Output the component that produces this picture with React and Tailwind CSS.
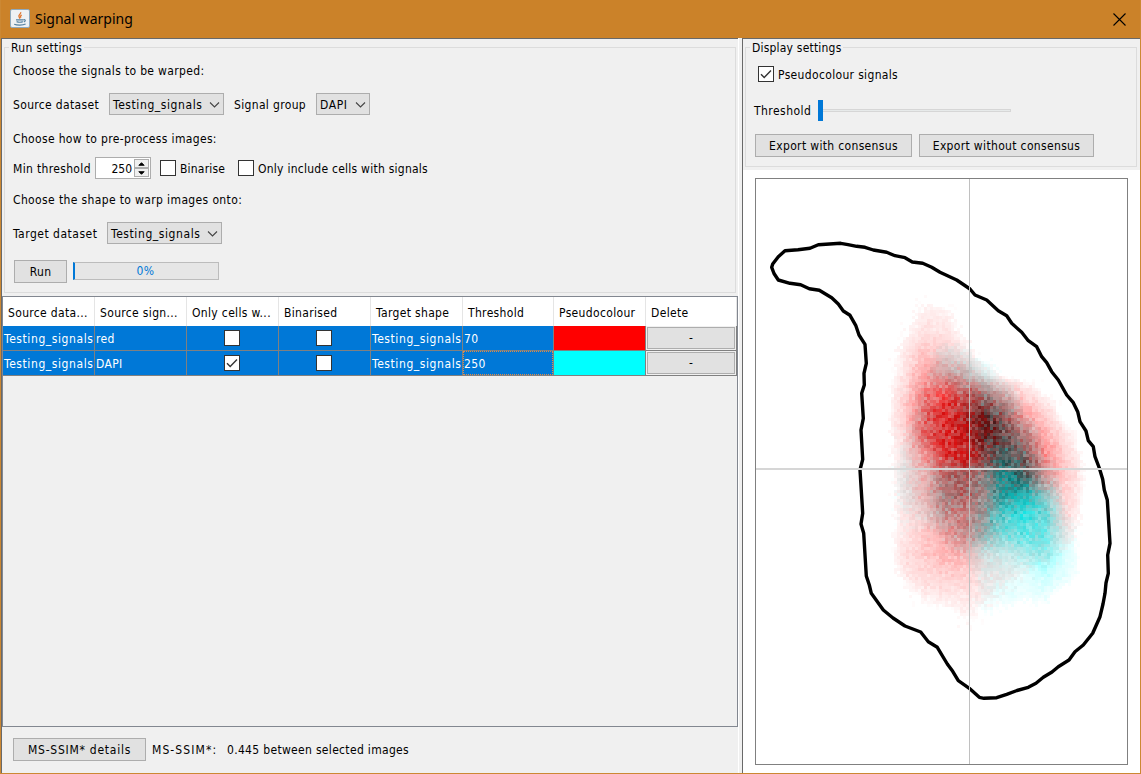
import React from "react";

const OUTLINE = [
  [771.7, 267.3], [774, 273.5], [778.3, 280], [790, 283.3], [800.7, 284.7], [809.3, 288.7], [819.3, 290.3],
  [831.7, 297.7], [838.3, 304], [843.3, 311], [850, 315.3], [855.7, 325.3], [859, 335], [865, 344.3],
  [866.3, 363.3], [864, 373.3], [864.3, 385], [861.7, 393.3], [863.3, 418.3], [861, 430], [862.7, 459.3],
  [860, 470], [862.7, 513.3], [861, 524], [863.7, 533.3], [866.3, 576], [869.3, 585], [871.3, 593.3],
  [883.3, 610], [893, 618], [905, 626], [920.7, 632], [928.3, 641.7], [937.3, 647.3], [947.3, 664],
  [952.7, 671.3], [958.3, 680.7], [969.3, 688.3], [979.3, 697.3], [984, 698.3], [996.7, 697.7],
  [1006.7, 694.3], [1017, 690.5], [1028.3, 687.3], [1036, 683.3], [1043.3, 677.3], [1052, 672], [1058.3, 666.7], [1069, 660], [1075, 651.7],
  [1083.3, 645], [1092.7, 633.3], [1100, 616.7], [1103, 604], [1105, 593.3], [1106, 583], [1108.3, 573.3], [1107.7, 555],
  [1110, 543.3], [1107.3, 500], [1104.3, 490], [1102.7, 479.3], [1099.3, 468], [1095, 456.7],
  [1093.3, 446.7], [1088.3, 440.7], [1086, 431], [1080, 421.7], [1077.7, 411.7], [1073.3, 402.7],
  [1066.7, 395], [1058.3, 380], [1051.7, 371.7], [1046.7, 362.7], [1041.7, 356.7], [1036.7, 346.7],
  [1028.3, 340.7], [1021.7, 332.3], [1011.7, 323.3], [1006.7, 315.7], [998.3, 310.7], [986.7, 300],
  [975, 295], [970, 289], [956.7, 280], [940, 272.3], [931.7, 267.3], [922.7, 263.3], [912.3, 262],
  [905, 257.7], [895, 255.7], [886.7, 252.3], [873.3, 250], [865, 247.3], [856.7, 246.3], [848, 244.6], [840.7, 243.3],
  [818.3, 244.7], [810, 248.3], [798, 249.8], [785, 250.7], [778.3, 256.7], [772.7, 264],
];

// Signal densities (tenths) sampled every 20px from (885, 295).
const RED = [
  [0, 0, 0.3, 0, 0, 0, 0, 0, 0, 0, 0],
  [0, 0.2, 0.8, 0.8, 0, 0, 0, 0, 0, 0, 0],
  [0, 0.5, 1.2, 1.1, 0.4, 0, 0, 0, 0, 0, 0],
  [0, 0.9, 2.5, 2, 1, 0, 0, 0, 0, 0, 0],
  [0, 1.1, 3.5, 4, 3.2, 1, 0.2, 0, 0, 0, 0],
  [0, 1.7, 5, 7, 6.6, 5.5, 3.3, 1.5, 0.5, 0, 0],
  [0.1, 2, 6, 8.2, 8.2, 8.5, 6, 3.7, 1.8, 0, 0],
  [0, 1.6, 6.3, 8.4, 8.7, 8.5, 7, 4.8, 3.2, 1, 0],
  [0, 1.3, 4.4, 7.7, 8.8, 7.3, 6, 6, 4.5, 1.7, 0.2],
  [0, 1.2, 3, 5.5, 6.3, 5, 5, 6, 4.7, 2.1, 0.4],
  [0, 1.1, 3, 5, 6, 4.4, 4, 2.7, 2.4, 1.7, 0.3],
  [0, 1, 2, 4.5, 5, 3.8, 1.8, 1.1, 1.5, 1.5, 0.2],
  [0, 1, 2, 3.5, 4.5, 2.8, 1.3, 1.1, 1.1, 1, 0.1],
  [0, 1.2, 2, 3, 2.8, 1.3, 0.9, 0.9, 0.9, 0.3, 0],
  [0, 0.8, 1.5, 1.8, 1.8, 1, 0.9, 0.5, 0.2, 0, 0],
  [0, 0.1, 0.8, 0.9, 1, 0.8, 0.4, 0, 0, 0, 0],
  [0, 0, 0, 0.2, 0.7, 0.3, 0, 0, 0, 0, 0],
  [0, 0, 0, 0, 0.1, 0, 0, 0, 0, 0, 0],
];
const CYAN = [
  [0, 0, 0, 0, 0, 0, 0, 0, 0, 0, 0],
  [0, 0, 0, 0, 0, 0, 0, 0, 0, 0, 0],
  [0, 0, 0, 0, 0, 0, 0, 0, 0, 0, 0],
  [0, 0, 0, 1.3, 0.9, 0, 0, 0, 0, 0, 0],
  [0, 0.2, 0.5, 1.8, 2.4, 1.6, 0, 0, 0, 0, 0],
  [0, 0.3, 0.8, 0.5, 2.5, 3.8, 2, 0, 0, 0, 0],
  [0, 0.2, 1.3, 1.2, 3, 6.2, 4.2, 0.6, 0, 0, 0],
  [0, 0.5, 1.3, 1.4, 2.4, 6, 6, 2.9, 0, 0, 0],
  [0, 0.9, 0.7, 1.5, 1.8, 4.7, 7, 5, 0.6, 0, 0],
  [0, 1, 0.9, 3, 3.6, 4.7, 8.8, 7, 1.8, 0, 0],
  [0, 1, 0.9, 3.4, 3.2, 4, 8.8, 8.7, 4.3, 0.2, 0],
  [0, 0.6, 0.9, 2.5, 2, 4.5, 7, 7.8, 5.8, 0.7, 0],
  [0, 0.3, 0.3, 0.8, 2.2, 4.2, 4.8, 6.3, 5.5, 1.2, 0],
  [0, 0, 0.2, 0.3, 0.7, 1.8, 2.1, 3, 4.3, 1.5, 0],
  [0, 0, 0, 0, 0, 1, 1.1, 1, 2.2, 1.1, 0],
  [0, 0, 0, 0, 0, 0.8, 1, 0.8, 0.9, 0, 0],
  [0, 0, 0, 0, 0, 0.5, 0.3, 0, 0, 0, 0],
  [0, 0, 0, 0, 0, 0, 0, 0, 0, 0, 0],
];

function sample(grid, x, y) {
  const i = Math.min(9, Math.floor(x));
  const j = Math.min(16, Math.floor(y));
  const s = x - i;
  const t = y - j;
  const top = grid[j][i] * (1 - s) + grid[j][i + 1] * s;
  const bottom = grid[j + 1][i] * (1 - s) + grid[j + 1][i + 1] * s;
  return (top * (1 - t) + bottom * t) / 10;
}

function buildCells() {
  let seed = 1234567;
  const rnd = () => {
    seed = (seed * 1664525 + 1013904223) % 4294967296;
    return seed / 4294967296;
  };
  const noisy = (density) => {
    const v = density < 0.09 ? (density * density) / 0.09 : density;
    const n = v * (1 + (rnd() + rnd() - 1) * 0.3) + (rnd() - 0.5) * 0.05;
    if (v < 0.003) return 0;
    if (v < 0.05 && rnd() > v / 0.05) return 0;
    return Math.max(0, Math.min(0.94, n));
  };
  const cells = [];
  for (let y = 295; y < 634; y += 3) {
    for (let x = 885; x < 1084; x += 3) {
      const u = (x - 885 + 1.5) / 20;
      const v = (y - 295 + 1.5) / 20;
      const r = noisy(sample(RED, u, v));
      const c = noisy(sample(CYAN, u, v));
      if (r < 0.01 && c < 0.01) continue;
      const gb = Math.round(255 * (1 - r));
      cells.push({ x, y, fill: `rgb(${Math.round(255 * (1 - c))},${gb},${gb})` });
    }
  }
  return cells;
}

const CELLS = buildCells();

function Check({ checked }) {
  return (
    <span className="flex h-4 w-4 shrink-0 items-center justify-center border border-[#333] bg-white">
      {checked && (
        <svg width="14" height="14" viewBox="0 0 14 14" fill="none" stroke="#333" strokeWidth="1.4">
          <path d="M2 7.2 5.2 10.4 12 3.6" />
        </svg>
      )}
    </span>
  );
}

function Combo({ children, className }) {
  return (
    <div className={`flex h-[22px] shrink-0 items-center justify-between border border-[#adadad] bg-[#e1e1e1] pr-[3px] pl-[3px] ${className}`}>
      <span className="pt-px tracking-[0.58px]">{children}</span>
      <svg width="11" height="8" viewBox="0 0 11 8" fill="none" stroke="#444" strokeWidth="1.1" className="mt-px shrink-0">
        <path d="M1 1.5 5.5 6 10 1.5" />
      </svg>
    </div>
  );
}

function Button({ children, className }) {
  return (
    <button className={`flex h-[23px] shrink-0 items-center justify-center border border-[#adadad] bg-[#e1e1e1] ${className}`}>
      {children}
    </button>
  );
}

function Plot() {
  return (
    <svg width="373" height="587" viewBox="755 178 373 587" className="block">
      <g shapeRendering="crispEdges">
        {CELLS.map((c) => (
          <rect key={`${c.x}-${c.y}`} x={c.x} y={c.y} width="3" height="3" fill={c.fill} />
        ))}
      </g>
      <polygon points={OUTLINE.map((p) => p.join(",")).join(" ")} fill="none" stroke="#000" strokeWidth="3.4" strokeLinejoin="round" />
      <g shapeRendering="crispEdges">
        <rect x="755" y="468" width="373" height="2" fill="#d6d6d6" />
        <rect x="969" y="178" width="1" height="587" fill="#c0c0c0" />
        <rect x="755.5" y="178.5" width="372" height="586" fill="none" stroke="#808080" />
      </g>
    </svg>
  );
}

const COLUMNS = ["Source data...", "Source sign...", "Only cells w...", "Binarised", "Target shape", "Threshold", "Pseudocolour", "Delete"];
const ROWS = [
  { signal: "red", only: false, threshold: "70", color: "bg-[#ff0000]" },
  { signal: "DAPI", only: true, threshold: "250", color: "bg-[#00ffff]", focus: true },
];
const GRID = "grid grid-cols-[92px_92px_92px_92px_92px_91px_92px_91px]";
const CELL = "flex items-center border-r border-b border-[#808080] bg-[#0078d7] text-white whitespace-nowrap overflow-hidden";

function SignalTable() {
  return (
    <div className="h-[431px] w-[736px] border border-[#828790]">
      <div className={`${GRID} h-[29px] bg-white`}>
        {COLUMNS.map((c) => (
          <div key={c} className="flex items-center border-r border-[#e5e5e5] pt-[3px] pl-[5px] whitespace-nowrap">{c}</div>
        ))}
      </div>
      {ROWS.map((r) => (
        <div key={r.signal} className={`${GRID} h-[25px]`}>
          <div className={`${CELL} pt-px pl-px tracking-[0.58px]`}>Testing_signals</div>
          <div className={`${CELL} pt-px pl-px`}>{r.signal}</div>
          <div className={`${CELL} justify-center pr-[2px]`}><Check checked={r.only} /></div>
          <div className={`${CELL} justify-center pr-[2px]`}><Check /></div>
          <div className={`${CELL} pt-px pl-px tracking-[0.58px]`}>Testing_signals</div>
          <div className={CELL}>
            <div className={`flex h-full w-full items-center border border-dotted ${r.focus ? "border-[#e08c48]" : "border-transparent"}`}><span className="pt-px">{r.threshold}</span></div>
          </div>
          <div className={`border-r border-b border-[#808080] ${r.color}`} />
          <div className="flex border-r border-b border-[#808080] bg-[#f0f0f0] p-px">
            <div className="flex flex-1 items-center justify-center border border-[#adadad] bg-[#e1e1e1]">-</div>
          </div>
        </div>
      ))}
    </div>
  );
}

function JavaIcon() {
  return (
    <svg width="20" height="20" viewBox="0 0 20 20" fill="none">
      <rect x="0.5" y="0.5" width="19" height="18" rx="1.5" fill="#eef1f4" stroke="#8fa9bd" />
      <path d="M10.6 3.2c1.2 1.6-2.8 2.6-1.6 4.6.4.7 1 1.2.6 2M11.8 6c-1.6.8-1.6 1.5-.8 2.6" stroke="#e0762f" strokeWidth="1.3" />
      <path d="M6 10.8h7.4M6.6 12.6c1.8.7 4.6.7 6.2 0M4.2 15.2c2.8 1.2 8.6 1.2 11.4-.2M13.6 10.8c2-.5 2.4 1.2.2 2.2" stroke="#54809f" strokeWidth="1.2" />
    </svg>
  );
}

export default function App() {
  return (
    <div className="flex h-[774px] w-[1141px] flex-col border border-t-0 border-[#cc8833] bg-[#f0f0f0] font-['DejaVu_Sans_Condensed','DejaVu_Sans',sans-serif] text-[12px] leading-4 tracking-[0.34px] text-black">
      <header className="flex h-[38px] shrink-0 items-center bg-[#cb8229] pr-[14px] pl-[9px]">
        <JavaIcon />
        <h1 className="ml-[5px] flex-1 font-['Noto_Sans',sans-serif] text-[14px] font-normal leading-5 tracking-normal">Signal warping</h1>
        <svg width="13" height="13" viewBox="0 0 13 13" stroke="#000" strokeWidth="1.1">
          <path d="M.5.5 12.5 12.5M12.5.5.5 12.5" />
        </svg>
      </header>
      <main className="flex min-h-0 flex-1">
        <section className="flex w-[737px] shrink-0 flex-col border-t border-l border-[#696969]">
          <fieldset className="ml-[2px] h-[254px] w-[732px] border border-[#dcdcdc] px-[8px] whitespace-nowrap">
            <legend className="-ml-[4px] h-4 px-[2px] leading-[18px]">Run settings</legend>
            <div className="flex h-8 items-center">Choose the signals to be warped:</div>
            <div className="flex h-[34px] items-center">
              <span className="w-24 pt-px">Source dataset</span>
              <Combo className="w-[115px]">Testing_signals</Combo>
              <span className="ml-[10px] w-[82px] pt-px">Signal group</span>
              <Combo className="w-[54px]">DAPI</Combo>
            </div>
            <div className="flex h-[35px] items-center">Choose how to pre-process images:</div>
            <div className="flex h-6 items-center">
              <span className="w-[82px] pt-px">Min threshold</span>
              <div className="flex h-[22px] w-14 items-center justify-end border border-[#adadad] bg-white pr-px">
                <span className="mr-[2px] pt-px tracking-normal">250</span>
                <div className="flex h-[18px] w-[15px] flex-col">
                  {["M4 6 7 3 10 6z", "M4 3 7 6 10 3z"].map((d) => (
                    <span key={d} className="flex h-[9px] items-center justify-center border border-[#adadad] bg-[#f0f0f0]">
                      <svg width="13" height="8" viewBox="0 0 14 9" className="shrink-0"><path d={d} fill="#000" stroke="#000" /></svg>
                    </span>
                  ))}
                </div>
              </div>
              <span className="ml-[9px] flex w-[78px] items-center gap-1"><Check /><span className="pt-px tracking-[0.2px]">Binarise</span></span>
              <span className="flex items-center gap-1"><Check /><span className="pt-px tracking-[0.25px]">Only include cells with signals</span></span>
            </div>
            <div className="flex h-10 items-center tracking-[0.37px]">Choose the shape to warp images onto:</div>
            <div className="flex h-[26px] items-center">
              <span className="w-[94px] pt-px tracking-[0.5px]">Target dataset</span>
              <Combo className="w-[115px]">Testing_signals</Combo>
            </div>
            <div className="flex items-start pt-[14px] pl-px">
              <Button className="w-[53px]">Run</Button>
              <div className="mt-[2px] ml-[6px] flex h-[18px] w-[146px] items-center justify-center border border-l-2 border-[#bcbcbc] border-l-[#0078d7] bg-[#e6e6e6] pr-[2px] text-[#0078d7]">0%</div>
            </div>
          </fieldset>
          <div className="mt-[3px]"><SignalTable /></div>
          <footer className="flex flex-1 items-start pt-[11px] pl-[11px] whitespace-nowrap">
            <Button className="w-[133px] tracking-[0.75px]">MS-SSIM* details</Button>
            <span className="mt-1 ml-[6px] w-[75px] tracking-[1.1px]">MS-SSIM*:</span>
            <span className="mt-1 tracking-[0.32px]">0.445 between selected images</span>
          </footer>
        </section>
        <div className="w-1 shrink-0 border-l border-white bg-[#f0f0f0]" />
        <section className="flex flex-1 flex-col border-t border-l border-[#696969] bg-white">
          <div className="h-[131px] bg-[#f0f0f0] pl-[2px]">
            <fieldset className="h-[128px] w-[392px] border border-[#dcdcdc] px-[9px] whitespace-nowrap">
              <legend className="-ml-[5px] h-4 px-[2px] leading-[18px] tracking-[0.2px]">Display settings</legend>
              <div className="flex h-[38px] items-center gap-1 pl-[3px]"><Check checked /><span className="pt-px">Pseudocolour signals</span></div>
              <div className="flex h-[34px] items-center">
                <span className="w-[63px] -ml-px mr-px pt-[2px] tracking-[0.45px]">Threshold</span>
                <span className="h-[21px] w-[5px] bg-[#0078d7]" />
                <span className="h-[3px] w-[188px] border border-l-0 border-[#d6d6d6] bg-[#e7eaea]" />
              </div>
              <div className="flex gap-[7px] pt-[7px]">
                <Button className="w-[157px]">Export with consensus</Button>
                <Button className="w-[175px]">Export without consensus</Button>
              </div>
            </fieldset>
          </div>
          <div className="pt-[8px] pl-[12px]"><Plot /></div>
        </section>
      </main>
    </div>
  );
}
